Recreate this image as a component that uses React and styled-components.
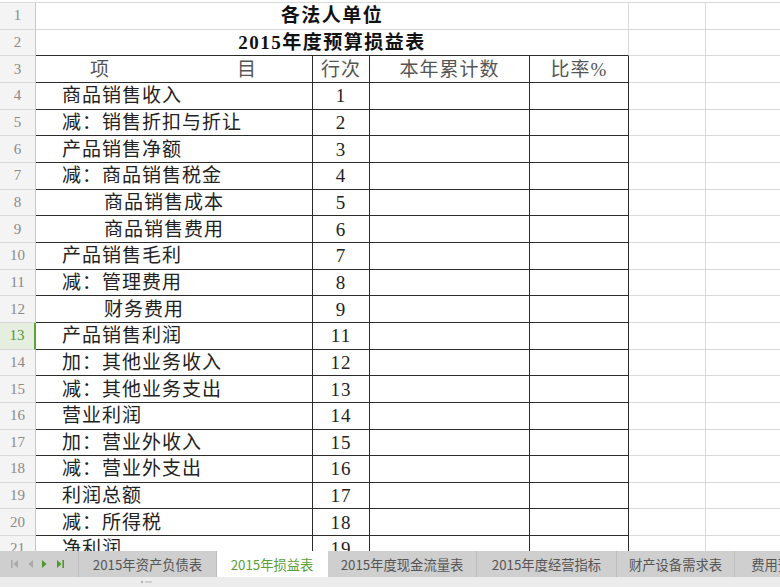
import styled, { createGlobalStyle } from "styled-components";

const GlobalStyle = createGlobalStyle`
  html, body {
    margin: 0;
    padding: 0;
    background: #fff;
  }
  * {
    box-sizing: border-box;
  }
`;

const ROW_H = "26.67px";
const GRID = "#d9d9d9";
const DARK = "#2b2b2b";

const rows = [
  { n: 4, name: "商品销售收入", no: "1" },
  { n: 5, name: "减：销售折扣与折让", no: "2" },
  { n: 6, name: "产品销售净额", no: "3" },
  { n: 7, name: "减：商品销售税金", no: "4" },
  { n: 8, name: "商品销售成本", no: "5", deep: true },
  { n: 9, name: "商品销售费用", no: "6", deep: true },
  { n: 10, name: "产品销售毛利", no: "7" },
  { n: 11, name: "减：管理费用", no: "8" },
  { n: 12, name: "财务费用", no: "9", deep: true },
  { n: 13, name: "产品销售利润", no: "11", active: true },
  { n: 14, name: "加：其他业务收入", no: "12" },
  { n: 15, name: "减：其他业务支出", no: "13" },
  { n: 16, name: "营业利润", no: "14" },
  { n: 17, name: "加：营业外收入", no: "15" },
  { n: 18, name: "减：营业外支出", no: "16" },
  { n: 19, name: "利润总额", no: "17" },
  { n: 20, name: "减：所得税", no: "18" },
  { n: 21, name: "净利润", no: "19" },
];

const tabs = [
  { name: "2015年资产负债表", w: 138 },
  { name: "2015年损益表", w: 111, active: true },
  { name: "2015年度现金流量表", w: 149 },
  { name: "2015年度经营指标", w: 140 },
  { name: "财产设备需求表", w: 118 },
  { name: "费用预算表", w: 100 },
];

const Window = styled.div`
  width: 780px;
  height: 587px;
  display: flex;
  flex-direction: column;
  overflow: hidden;
  font-family: "Liberation Serif", "Noto Sans CJK SC", serif;
`;

const Sheet = styled.div`
  flex: 1;
  overflow: hidden;
  border-top: 2px solid #fff;
`;

const Grid = styled.div`
  display: grid;
  grid-template-columns: 36px 277px 57px 160px 99px 77px 120px;
  grid-auto-rows: ${ROW_H};
  border-top: 1px solid ${GRID};
`;

const RowHead = styled.div`
  display: flex;
  align-items: center;
  justify-content: center;
  background: ${(p) => (p.$active ? "#e6eee0" : "#f4f4f4")};
  color: ${(p) => (p.$active ? "#4f9a33" : "#8a8a8a")};
  font-family: "Liberation Serif", serif;
  font-size: 15px;
  border-bottom: 1px solid ${GRID};
  border-right: ${(p) => (p.$active ? "2px solid #5aa33c" : `1px solid #c8c8c8`)};
`;

const Cell = styled.div`
  grid-column: span ${(p) => p.$span || 1};
  display: flex;
  align-items: center;
  justify-content: ${(p) => p.$align || "flex-start"};
  padding-left: ${(p) => p.$indent || 0}px;
  border-right: 1px solid ${(p) => (p.$darkRight ? DARK : GRID)};
  border-bottom: 1px solid ${(p) => (p.$darkBottom ? DARK : GRID)};
  color: #222;
  font-size: 19px;
  letter-spacing: 1px;
  white-space: nowrap;
  line-height: 1;
`;

const Title = styled(Cell)`
  font-weight: bold;
  font-size: 19px;
  letter-spacing: 1.5px;
  color: #111;
`;

const HeadCell = styled(Cell)`
  color: #555;
  justify-content: ${(p) => p.$align || "center"};
  padding: ${(p) => (p.$spread ? "0 55px 0 54px" : "0")};
`;

const TabBar = styled.div`
  height: 26px;
  display: flex;
  align-items: stretch;
  background: #cfcfcf;
  font-family: "Noto Sans CJK SC", sans-serif;
`;

const Nav = styled.div`
  width: 79px;
  flex-shrink: 0;
  display: flex;
  align-items: center;
  gap: 5px;
  padding-left: 10px;
  border-right: 1px solid #bdbdbd;
`;

const Tab = styled.div`
  width: ${(p) => p.$w}px;
  flex-shrink: 0;
  display: flex;
  align-items: center;
  justify-content: center;
  font-size: 13.3px;
  color: ${(p) => (p.$active ? "#5a9e35" : "#555")};
  background: ${(p) => (p.$active ? "#fff" : "transparent")};
  border-right: 1px solid ${(p) => (p.$active ? "#fff" : "#bdbdbd")};
  white-space: nowrap;
  overflow: hidden;
`;

const StatusStrip = styled.div`
  height: 10px;
  background: #ececec;
  display: flex;
  align-items: center;
  padding-left: 140px;
`;

const NavIcon = ({ dir, bar, green }) => {
  const c = green ? "#4c9a2a" : "#a9a9a9";
  return (
    <svg width="10" height="10" viewBox="0 0 10 10">
      {dir === "left" ? (
        <>
          {bar && <rect x="1" y="1" width="1.6" height="8" fill={c} />}
          <polygon points="8,1 3.5,5 8,9" fill={c} />
        </>
      ) : (
        <>
          <polygon points="2,1 6.5,5 2,9" fill={c} />
          {bar && <rect x="7.4" y="1" width="1.6" height="8" fill={c} />}
        </>
      )}
    </svg>
  );
};

const Filler = () => (
  <>
    <Cell />
    <Cell />
  </>
);

const App = () => {
  return (
    <Window>
      <GlobalStyle />
      <Sheet>
        <Grid>
          <RowHead>1</RowHead>
          <Title $span={4} $align="center">
            各法人单位
          </Title>
          <Filler />

          <RowHead>2</RowHead>
          <Title $span={4} $align="center" $darkBottom>
            2015年度预算损益表
          </Title>
          <Filler />

          <RowHead>3</RowHead>
          <HeadCell $align="space-between" $spread $darkRight $darkBottom>
            <span>项</span>
            <span>目</span>
          </HeadCell>
          <HeadCell $darkRight $darkBottom>行次</HeadCell>
          <HeadCell $darkRight $darkBottom>本年累计数</HeadCell>
          <HeadCell $darkRight $darkBottom>比率%</HeadCell>
          <Filler />

          {rows.map((r) => (
            <>
              <RowHead key={`h${r.n}`} $active={r.active}>
                {r.n}
              </RowHead>
              <Cell $indent={r.deep ? 68 : 26} $darkRight $darkBottom>
                {r.name}
              </Cell>
              <Cell $align="center" $darkRight $darkBottom>
                {r.no}
              </Cell>
              <Cell $darkRight $darkBottom />
              <Cell $darkRight $darkBottom />
              <Filler />
            </>
          ))}
        </Grid>
      </Sheet>
      <TabBar>
        <Nav>
          <NavIcon dir="left" bar />
          <NavIcon dir="left" />
          <NavIcon dir="right" green />
          <NavIcon dir="right" bar green />
        </Nav>
        {tabs.map((t) => (
          <Tab key={t.name} $w={t.w} $active={t.active}>
            {t.name}
          </Tab>
        ))}
      </TabBar>
      <StatusStrip>
        <svg width="12" height="6" viewBox="0 0 12 6">
          <circle cx="2" cy="3" r="1.2" fill="#b5b5b5" />
          <rect x="5" y="2.5" width="7" height="1" fill="#b5b5b5" />
        </svg>
      </StatusStrip>
    </Window>
  );
};

export default App;
